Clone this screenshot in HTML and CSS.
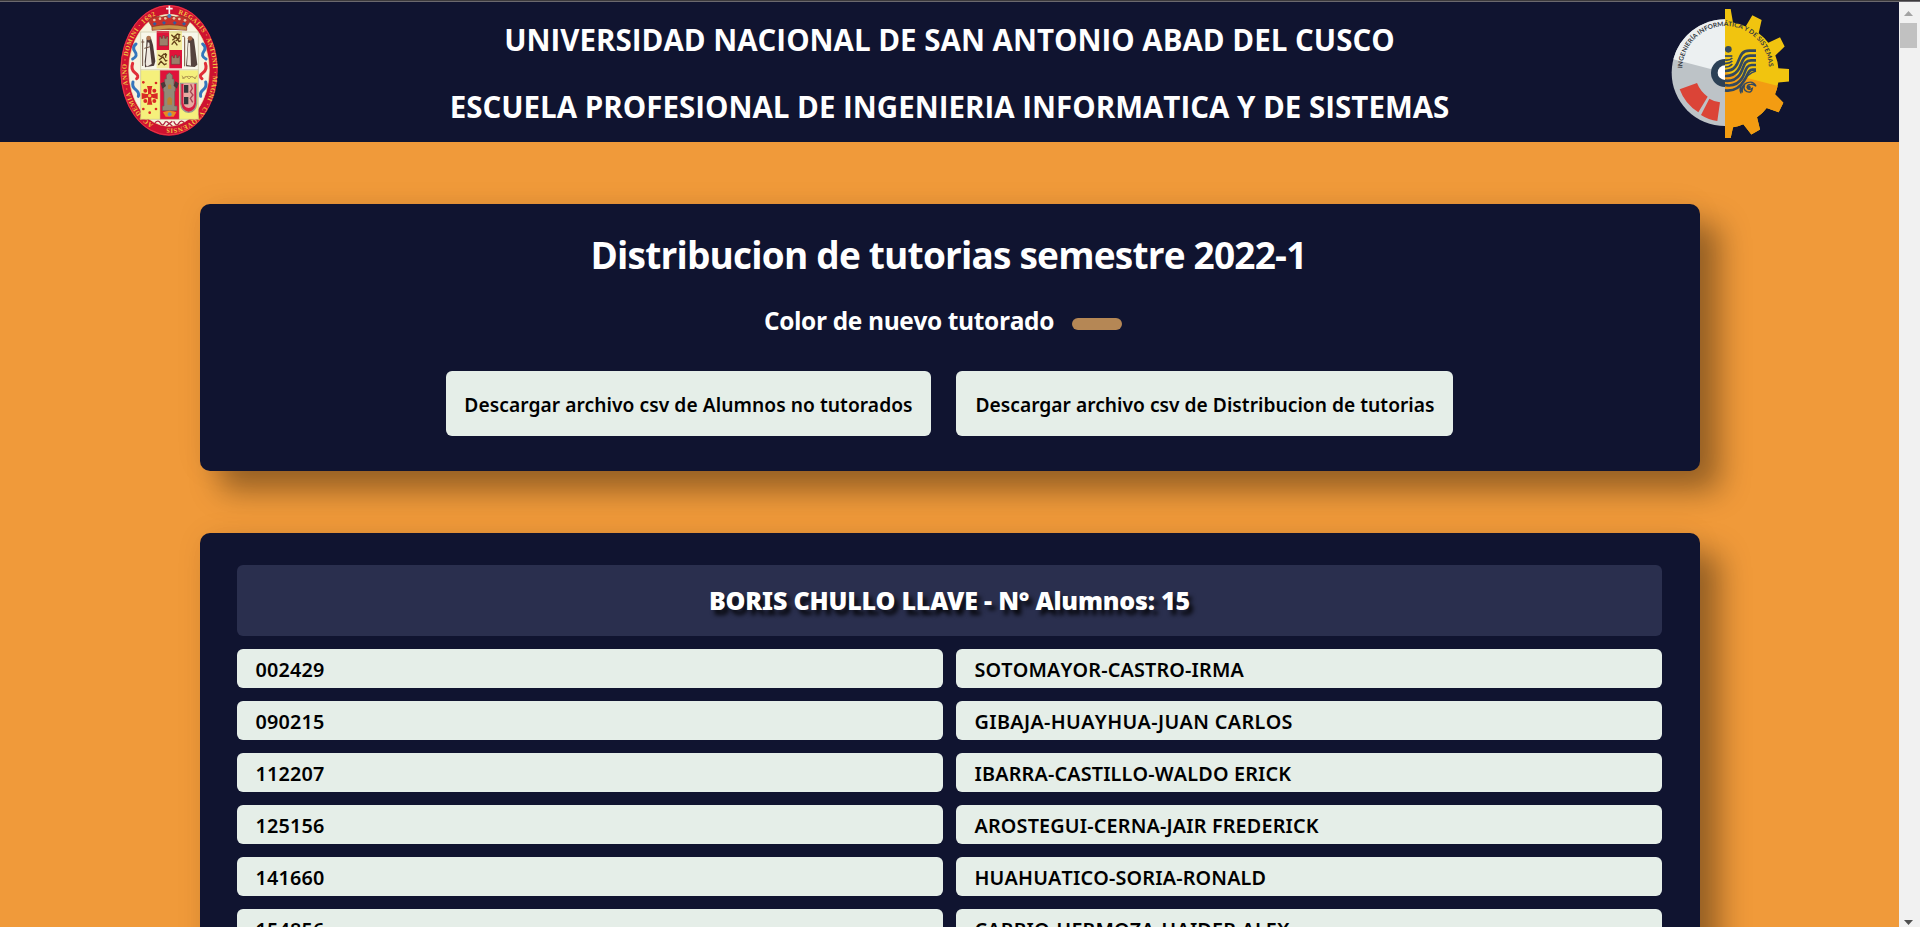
FILE: index.html
```
<!DOCTYPE html>
<html lang="es">
<head>
<meta charset="utf-8">
<title>Distribucion de tutorias</title>
<link rel="stylesheet" href="styles.css">
</head>
<body>
<div class="topline"></div>
<div class="viewport">
<div class="page">
<header class="header">
<svg class="seal" viewBox="60 12 294 396">
<defs>
<path id="ringL" d="M164 374A126 173 0 0 1 200 38"/>
<path id="ringR" d="M230 41A126 173 0 1 1 172 376"/>
</defs>
<ellipse cx="207" cy="211" rx="146" ry="196" fill="#cf1230"/>
<ellipse cx="207" cy="211" rx="144" ry="194" fill="none" stroke="#e8384a" stroke-width="3"/>
<ellipse cx="207" cy="211" rx="121" ry="168" fill="#f7f3df" stroke="#f2e6a0" stroke-width="2"/>
<g class="ring-text">
<text><textPath href="#ringL" textLength="385" startOffset="4">ACADEMIA · ANNO · DOMINI · 1692</textPath></text>
<text><textPath href="#ringR" textLength="465" startOffset="4">REGALIS · ANTONII · MAGNI · CVZQVENSIS</textPath></text>
</g>
<rect x="122" y="96" width="173" height="115" fill="#f8f7ea"/>
<rect x="170" y="93" width="38" height="57" fill="#e0123a"/>
<rect x="208" y="93" width="38" height="57" fill="#f3ec9c"/>
<rect x="170" y="150" width="38" height="55" fill="#f3ec9c"/>
<rect x="208" y="150" width="38" height="55" fill="#e0123a"/>
<rect x="122" y="211" width="58" height="147" fill="#f5f07c"/>
<rect x="180" y="211" width="58" height="147" fill="#e0123a"/>
<path d="M238 211h57v147h-57z" fill="#f5f07c"/>
<path d="M122 96h173v262H122zM122 209h173M180 211v147M238 211v147" fill="none" stroke="#b9b48c" stroke-width="1.5"/>
<path d="M158 84l-10-16q-4-13 12-15 12-6 26-2 20-8 42 0 18-5 28 2 16 2 13 14l-12 18q-50 8-99-1z" fill="#c7322b" stroke="#7d4a26" stroke-width="2"/>
<path d="M156 80q51-12 104 0v11q-52-8-104 0z" fill="#c99246" stroke="#8d3020" stroke-width="2"/>
<g fill="#e9c7a0"><circle cx="163" cy="60" r="4"/><circle cx="180" cy="56" r="4"/><circle cx="196" cy="55" r="4"/><circle cx="222" cy="55" r="4"/><circle cx="238" cy="57" r="4"/><circle cx="255" cy="61" r="4"/></g>
<g fill="#345c9b"><path d="M164 66l6 5-6 6-6-6zM192 63l6 5-6 6-6-6zM224 63l6 5-6 6-6-6zM252 66l6 5-6 6-6-6z"/></g>
<path d="M208 17v28M198 26h20" stroke="#f8f4f0" stroke-width="5"/><circle cx="208" cy="48" r="6" fill="#487bb8"/>
<g fill="#9b7f6a" stroke="#5a3a35" stroke-width="1.5"><path d="M178 137v-27h5v5h5v-8h6v8h5v-5h5v27zM214 193v-25h5v5h5v-8h6v8h5v-5h5v25z"/></g>
<g fill="none" stroke="#654018" stroke-width="4"><path d="M214 104l8 8 10-10 9 2M217 121l12-9 8 13 5-3M215 134l8-10 9 12M237 101v14l-10 8M175 164l8 6 9-8 9 3M177 180l12-9 8 12 5-2M175 195l8-11 10 10 7-3M197 160v13"/></g>
<path d="M140 113q8-7 13 2l6 20 7 49-4 13-27 5-1-17 4-35z" fill="#4c3b38"/>
<path d="M143 127l5 1 7 64-15 8-3-8z" fill="#efe9e0"/><circle cx="146" cy="114" r="7" fill="#b07450"/><path d="M128 118v80M124 126h9M133 145l18-5" stroke="#6c5140" stroke-width="3"/>
<path d="M264 115q10-9 18 3l4 30 6 46-8 7-26-2 3-34z" fill="#54433e"/>
<path d="M265 128l5 1 3 68-12-2z" fill="#efe8dc"/><circle cx="270" cy="115" r="7" fill="#a76847"/><path d="M254 199v-86q-4-10-6-2" fill="none" stroke="#77523a" stroke-width="3"/>
<g fill="#d92a25"><path d="M141 258h16l-3 12h-10zM141 314h16l-3-12h-10zM125 279l14 3v12l-14 4zM173 279l-14 3v12l14 4z"/><path d="M144 266h10v44h-10zM131 282h36v11h-36z"/><circle cx="136" cy="272" r="6"/><circle cx="163" cy="272" r="6"/><circle cx="136" cy="303" r="6"/><circle cx="163" cy="303" r="6"/><circle cx="130" cy="247" r="4"/><circle cx="168" cy="249" r="4"/><circle cx="130" cy="327" r="4"/><circle cx="149" cy="338" r="4"/><circle cx="168" cy="327" r="4"/></g>
<circle cx="149" cy="287" r="5" fill="#f3cc52"/>
<path d="M187 332v-14h5v-44h-2v-16h4v-21h5v-12l9-7 9 7v12h5v21h4v16h-2v44h7v14z" fill="#928a77" stroke="#665f58" stroke-width="2"/>
<path d="M202 314v-17q7-12 14 0v17zM204 267v-10q5-8 10 0v10z" fill="#b98335"/>
<path d="M187 266l-5-16 11-5 5 13M231 266l5-16-10-6-5 13" fill="#4c3938"/><path d="M189 337q20-9 40 0l-8 13h-24z" fill="#e58c22"/><circle cx="209" cy="343" r="6" fill="#6290bd"/>
<path d="M242 250h48v61q-3 24-24 26-21-2-24-26z" fill="#d71c42" stroke="#9a998f" stroke-width="4"/>
<path d="M250 250h33v58q-3 14-17 16-14-2-16-16z" fill="#e6aaa2"/>
<path d="M252 255h13v23h-13zM252 291h13v22h-13z" fill="#33383b"/><path d="M272 253l5 12-6 10 8 10-8 10 7 12" fill="none" stroke="#a34853" stroke-width="4"/>
<path d="M246 235q19-12 42 0M246 227l5 10 8-9 8 9 9-9 9 9 5-10" fill="none" stroke="#b9a257" stroke-width="3"/>
<g fill="none" stroke-width="9" stroke-linecap="round"><path d="M108 132q-13 10-3 23t-7 22" stroke="#3476bc"/><path d="M98 190q-7 18 7 28t5 18" stroke="#e02e38"/><path d="M99 246q-4 14 8 23t8 20" stroke="#3476bc"/><path d="M308 132q13 10 3 23t7 22" stroke="#3476bc"/><path d="M316 190q7 18-7 28t-3 18" stroke="#e02e38"/><path d="M317 246q4 14-7 23t-8 20" stroke="#3476bc"/></g>
<path d="M165 368q10-10 17 2t15-6M253 368q-10-10-17 2t-15-6M199 364l18 14M217 364l-18 14" fill="none" stroke="#b02540" stroke-width="4"/>
</svg>
<div class="titles">
<h1>UNIVERSIDAD NACIONAL DE SAN ANTONIO ABAD DEL CUSCO</h1>
<h1>ESCUELA PROFESIONAL DE INGENIERIA INFORMATICA Y DE SISTEMAS</h1>
</div>
<svg class="gear" viewBox="63 24 357 390">
<defs>
<path id="arc" d="M97 208A130 130 0 0 1 357 208"/>
<clipPath id="gearShape"><path transform="translate(0 -1) scale(1 1.035)" d="M225 27h17l7 39q20 3 38 12l20-33 28 14-9 38q17 12 29 28l35-16 14 27-28 26q8 18 9 37l32 2v36l-32 3q-3 18-10 34l25 25-14 27-36-12q-12 16-29 27l9 35-26 15-24-30q-17 7-31 9l-7 31h-17z"/></clipPath>
</defs>
<path d="M225 58a160 160 0 0 0 0 320z" fill="#bdc3c7"/>
<path d="M225 58A160 160 0 0 0 70 178L225 218z" fill="#ecf0f1"/>
<g clip-path="url(#gearShape)"><rect x="225" y="24" width="195" height="390" fill="#f1c40f"/><path d="M225 217l195 50v150H225z" fill="#f39c12"/></g>
<path d="M89 268l52-19q10 25 32 41l-28 47q-40-25-56-69zM178 296q15 9 32 11l-8 56q-26-3-49-18z" fill="#db4437"/>
<path d="M225 177a42 42 0 0 0 0 84z" fill="#2c4156"/><path d="M225 196a22 22 0 0 0 0 44z" fill="#fff"/>
<circle cx="235" cy="148" r="10" fill="#34495e"/>
<g fill="none" stroke="#34495e" stroke-width="8"><path d="M225 168h22" stroke-width="5"/><path d="M225 180q14 2 22-6M225 190q14 1 22-7M225 201q14 0 22-9" stroke-width="5"/><path d="M318 152h-20c-32 0-27 31-42 48q-10 13-31 13"/><path d="M318 167h-17c-28 0-23 28-38 45q-13 17-38 16"/><path d="M318 181h-15c-24 0-21 25-34 43q-15 21-44 18"/><path d="M318 195h-13c-19 0-18 23-29 40q-18 27-51 20"/><path d="M318 209h-10c-14 0-15 17-25 32q-21 35-58 30"/></g>
<path d="M318 213q-25 7-42 36-9 20-4 28 2-22 20-29 19-6 26 11-8-7-15-6-13 0-11 10 3 9 15 2-2 15-16 10-13-6-7-19-9 7-7 22" fill="none" stroke="#34495e" stroke-width="4"/><circle cx="296" cy="262" r="6" fill="#34495e"/>
<text class="arc-text"><textPath href="#arc" textLength="398" startOffset="3" lengthAdjust="spacingAndGlyphs">INGENIERÍA INFORMÁTICA Y DE SISTEMAS</textPath></text>
</svg>
</header>
<main class="main">
<section class="card intro">
<h2 class="intro-title">Distribucion de tutorias semestre 2022-1</h2>
<div class="legend"><span>Color de nuevo tutorado</span><i class="swatch"></i></div>
<div class="buttons"><a class="btn">Descargar archivo csv de Alumnos no tutorados</a><a class="btn wide">Descargar archivo csv de Distribucion de tutorias</a></div>
</section>
<section class="card group">
<h3 class="tutor">BORIS CHULLO LLAVE - N° Alumnos: 15</h3>
<div class="cell">002429</div><div class="cell">SOTOMAYOR-CASTRO-IRMA</div>
<div class="cell">090215</div><div class="cell wider">GIBAJA-HUAYHUA-JUAN CARLOS</div>
<div class="cell">112207</div><div class="cell">IBARRA-CASTILLO-WALDO ERICK</div>
<div class="cell">125156</div><div class="cell">AROSTEGUI-CERNA-JAIR FREDERICK</div>
<div class="cell">141660</div><div class="cell">HUAHUATICO-SORIA-RONALD</div>
<div class="cell">154856</div><div class="cell">CARRIO-HERMOZA-HAIDER ALEX</div>
</section>
</main>
</div>
<div class="scrollbar">
<svg width="9" height="5" viewBox="0 0 9 5"><path d="M0 5L4.5 0L9 5z" fill="#a3a3a3"/></svg>
<div class="thumb"></div>
<svg class="down" width="9" height="5" viewBox="0 0 9 5"><path d="M0 0h9L4.5 5z" fill="#505050"/></svg>
</div>
</div>
</body>
</html>
```

FILE: styles.css
```
* { box-sizing: border-box; }
html, body { margin: 0; height: 100%; overflow: hidden; }
body { display: flex; flex-direction: column; font-family: "Noto Sans", sans-serif; background: #f09a3a; }
h1, h2, h3 { margin: 0; white-space: nowrap; }
.topline { flex: none; height: 2px; background: #3c3a3c; border-bottom: 1px solid #6b696e; }
.viewport { flex: 1; min-height: 0; display: flex; }
.page { flex: 1; min-width: 0; overflow: hidden; }
.header { height: 140px; display: grid; grid-template-columns: 98px 1fr 119px; padding: 2px 109px 0 120px; background: #101430; }
.seal { width: 98px; height: 132px; }
.gear { width: 119px; height: 130px; margin-top: 4px; }
.ring-text { fill: #f0c342; font: 700 20px "Liberation Serif", serif; }
.arc-text { fill: #34393f; font: 700 19px Lato, sans-serif; }
.titles { display: flex; flex-direction: column; align-items: center; gap: 27px; padding: 16px 0 0 10px; color: #fff; }
.titles h1 { font: 700 29.5px/40px "Open Sans", sans-serif; }
.main { width: 1500px; margin: 62px 0 0 200px; display: flex; flex-direction: column; gap: 62px; }
.card { background: #101430; border-radius: 10px; box-shadow: 20px 20px 30px rgba(0, 0, 0, .36), 0 0 30px rgba(0, 0, 0, .06); }
.intro { height: 267px; display: flex; flex-direction: column; align-items: center; padding-top: 25px; color: #fff; }
.intro-title { font: 700 37px/52px "Open Sans", sans-serif; letter-spacing: -.79px; padding-right: 3px; }
.legend { display: flex; align-items: center; gap: 18px; margin-top: 22px; padding-right: 14px; font: 700 24.5px/36px "Open Sans", sans-serif; letter-spacing: -.37px; }
.swatch { width: 50px; height: 12px; margin-top: 5px; border-radius: 6px; background: #b58755; }
.buttons { display: flex; gap: 25px; margin-top: 32px; padding-right: 1px; }
.btn { width: 485px; height: 65px; border-radius: 6px; background: #e5eee8; color: #000; font-size: 19.2px; font-weight: 600; line-height: 67px; text-align: center; white-space: nowrap; letter-spacing: .06px; }
.btn.wide { width: 497px; padding-left: 1px; letter-spacing: .02px; }
.group { height: 1000px; display: grid; grid-template-columns: 1fr 1fr; align-content: start; gap: 13px; padding: 32px 38px 32px 37px; }
.tutor { grid-column: 1 / -1; height: 71px; border-radius: 6px; background: #2a2f4e; color: #fff; text-align: center; font-size: 25px; font-weight: 900; line-height: 70px; letter-spacing: -.19px; text-shadow: 4px 5px 4px rgba(0, 0, 0, .8); }
.cell { height: 39px; border-radius: 6px; background: #e5eee8; color: #000; padding-left: 18.5px; font-size: 19.8px; font-weight: 600; line-height: 41px; font-kerning: none; letter-spacing: .17px; white-space: nowrap; }
.cell.wider { letter-spacing: .36px; }
.scrollbar { flex: none; width: 21px; display: flex; flex-direction: column; align-items: center; padding: 9px 3px 2px 1px; background: #f1f1f1; }
.thumb { width: 17px; height: 25px; margin-top: 7px; background: #c1c1c1; }
.down { margin-top: auto; }
```
